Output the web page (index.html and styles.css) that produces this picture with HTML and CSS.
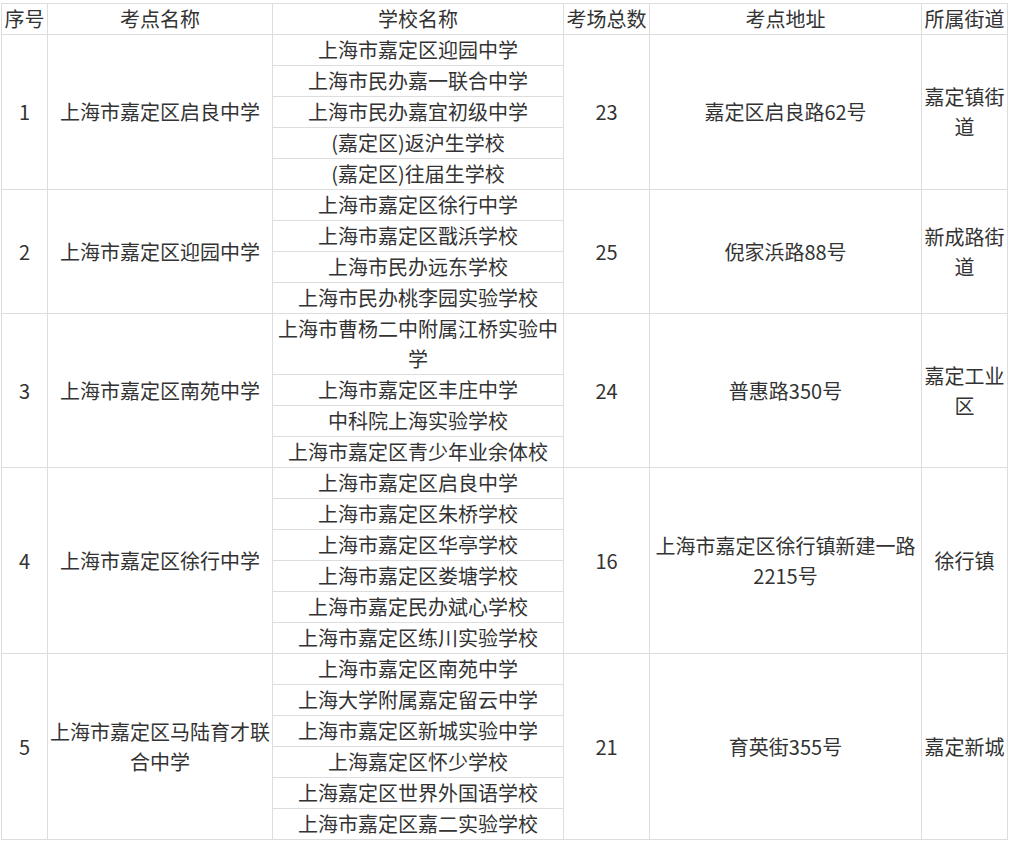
FILE: index.html
```html
<!DOCTYPE html>
<html lang="zh-CN">
<head>
<meta charset="utf-8">
<title>考点安排</title>
<link rel="stylesheet" href="styles.css">
</head>
<body>
<table class="exam">
  <colgroup>
    <col class="c-no">
    <col class="c-name">
    <col class="c-school">
    <col class="c-count">
    <col class="c-addr">
    <col class="c-street">
  </colgroup>
  <thead>
    <tr><th>序号</th><th>考点名称</th><th>学校名称</th><th>考场总数</th><th>考点地址</th><th>所属街道</th></tr>
  </thead>
  <tbody>
    <tr><td rowspan="5">1</td><td rowspan="5">上海市嘉定区启良中学</td><td>上海市嘉定区迎园中学</td><td rowspan="5">23</td><td rowspan="5">嘉定区启良路62号</td><td rowspan="5">嘉定镇街道</td></tr>
    <tr><td>上海市民办嘉一联合中学</td></tr>
    <tr><td>上海市民办嘉宜初级中学</td></tr>
    <tr><td>(嘉定区)返沪生学校</td></tr>
    <tr><td>(嘉定区)往届生学校</td></tr>

    <tr><td rowspan="4">2</td><td rowspan="4">上海市嘉定区迎园中学</td><td>上海市嘉定区徐行中学</td><td rowspan="4">25</td><td rowspan="4">倪家浜路88号</td><td rowspan="4">新成路街道</td></tr>
    <tr><td>上海市嘉定区戬浜学校</td></tr>
    <tr><td>上海市民办远东学校</td></tr>
    <tr><td>上海市民办桃李园实验学校</td></tr>

    <tr><td rowspan="4">3</td><td rowspan="4">上海市嘉定区南苑中学</td><td>上海市曹杨二中附属江桥实验中学</td><td rowspan="4">24</td><td rowspan="4">普惠路350号</td><td rowspan="4">嘉定工业区</td></tr>
    <tr><td>上海市嘉定区丰庄中学</td></tr>
    <tr><td>中科院上海实验学校</td></tr>
    <tr><td>上海市嘉定区青少年业余体校</td></tr>

    <tr><td rowspan="6">4</td><td rowspan="6">上海市嘉定区徐行中学</td><td>上海市嘉定区启良中学</td><td rowspan="6">16</td><td rowspan="6">上海市嘉定区徐行镇新建一路2215号</td><td rowspan="6">徐行镇</td></tr>
    <tr><td>上海市嘉定区朱桥学校</td></tr>
    <tr><td>上海市嘉定区华亭学校</td></tr>
    <tr><td>上海市嘉定区娄塘学校</td></tr>
    <tr><td>上海市嘉定民办斌心学校</td></tr>
    <tr><td>上海市嘉定区练川实验学校</td></tr>

    <tr><td rowspan="6">5</td><td rowspan="6">上海市嘉定区马陆育才联合中学</td><td>上海市嘉定区南苑中学</td><td rowspan="6">21</td><td rowspan="6">育英街355号</td><td rowspan="6">嘉定新城</td></tr>
    <tr><td>上海大学附属嘉定留云中学</td></tr>
    <tr><td>上海市嘉定区新城实验中学</td></tr>
    <tr><td>上海嘉定区怀少学校</td></tr>
    <tr><td>上海嘉定区世界外国语学校</td></tr>
    <tr><td>上海市嘉定区嘉二实验学校</td></tr>
  </tbody>
</table>
</body>
</html>
```
FILE: styles.css
```css
html, body {
  margin: 0;
  background: #ffffff;
}
body {
  padding: 3px 0 0 1px;
  font-family: "Noto Sans CJK SC", "Noto Sans", sans-serif;
  color: #333333;
}
.exam {
  border-collapse: collapse;
  table-layout: fixed;
  width: 1007px;
  font-size: 20px;
  line-height: 30px;
}
.c-no { width: 46px; }
.c-name { width: 225px; }
.c-school { width: 291px; }
.c-count { width: 86px; }
.c-addr { width: 272px; }
.c-street { width: 86px; }
.exam th,
.exam td {
  border: 1px solid #dddddd;
  padding: 0 2px;
  height: 30px;
  text-align: center;
  vertical-align: middle;
  font-weight: normal;
  word-break: break-all;
}
```
